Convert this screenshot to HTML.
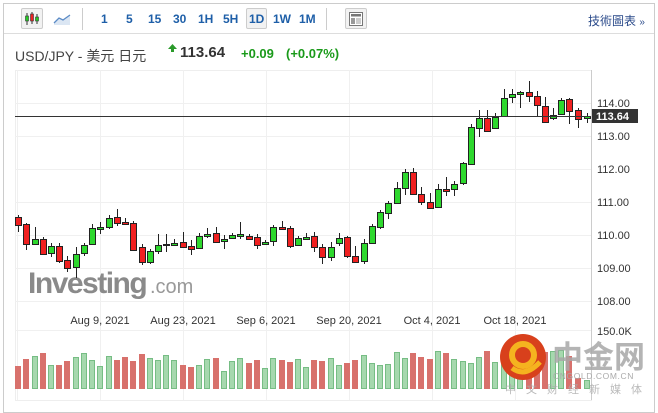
<!DOCTYPE html>
<html><head><meta charset="utf-8"><style>
*{margin:0;padding:0;box-sizing:border-box}
body{width:658px;height:407px;background:#fff;font-family:"Liberation Sans","Noto Sans CJK TC",sans-serif;overflow:hidden;position:relative}
.frame{position:absolute;left:3px;top:3px;width:652px;height:410px;border:1px solid #ccc}
.tb{position:absolute;left:4px;top:4px;width:650px;height:30px;border-bottom:1px solid #ddd}
.t{position:absolute;top:12px;font-size:12px;font-weight:bold;color:#1e5fa8}
.btn{position:absolute;top:8px;height:21px;border:1px solid #ccc;border-radius:2px;background:#f2f2f2}
.sep{position:absolute;top:8px;width:1px;height:22px;background:#ccc}
</style></head><body>
<div class="frame"></div>
<div class="tb"></div>
<div class="btn" style="left:21px;width:22px"></div>
<svg style="position:absolute;left:24px;top:11px" width="16" height="16"><line x1="3" y1="2" x2="3" y2="14" stroke="#333"/><rect x="1.5" y="5" width="3" height="5" fill="#2c2" stroke="#333" stroke-width=".6"/><line x1="8" y1="1" x2="8" y2="13" stroke="#333"/><rect x="6.5" y="3" width="3" height="7" fill="#e22" stroke="#333" stroke-width=".6"/><line x1="13" y1="3" x2="13" y2="13" stroke="#333"/><rect x="11.5" y="6" width="3" height="4" fill="#2c2" stroke="#333" stroke-width=".6"/></svg>
<svg style="position:absolute;left:53px;top:12px" width="18" height="14"><path d="M1 11 L6 6 L10 8 L17 3 L17 13 L1 13Z" fill="#dbe6f3"/><path d="M1 11 L6 6 L10 8 L17 3" fill="none" stroke="#5b8bc6" stroke-width="1.3"/></svg>
<div class="sep" style="left:82px"></div>
<div class="t" style="left:101px">1</div>
<div class="t" style="left:126px">5</div>
<div class="t" style="left:148px">15</div>
<div class="t" style="left:173px">30</div>
<div class="t" style="left:198px">1H</div>
<div class="t" style="left:223px">5H</div>
<div class="btn" style="left:246px;width:21px"></div>
<div class="t" style="left:249px">1D</div>
<div class="t" style="left:273px">1W</div>
<div class="t" style="left:299px">1M</div>
<div class="sep" style="left:326px"></div>
<div class="btn" style="left:345px;width:22px"></div>
<svg style="position:absolute;left:349px;top:12px" width="14" height="14"><rect x=".5" y=".5" width="13" height="13" fill="#fff" stroke="#777"/><rect x="2" y="2" width="10" height="2.5" fill="#777"/><rect x="2" y="6" width="4" height="6" fill="#999"/><line x1="7" y1="7" x2="12" y2="7" stroke="#999"/><line x1="7" y1="9" x2="12" y2="9" stroke="#999"/><line x1="7" y1="11" x2="12" y2="11" stroke="#999"/></svg>
<div style="position:absolute;left:588px;top:12px;font-size:12px;color:#2a4a8a">技術圖表 <span style="font-size:10px">»</span></div>
<div style="position:absolute;left:15px;top:46px;font-size:14px;color:#444">USD/JPY - 美元 日元</div>
<svg style="position:absolute;left:168px;top:44px" width="9" height="8"><path d="M4.5 0 L9 5 L6 5 L6 8 L3 8 L3 5 L0 5Z" fill="#2a9a2a"/></svg>
<div style="position:absolute;left:180px;top:44px;font-size:15px;font-weight:bold;color:#333">113.64</div>
<div style="position:absolute;left:241px;top:46px;font-size:13px;font-weight:bold;color:#1a9a1a">+0.09</div>
<div style="position:absolute;left:286px;top:46px;font-size:13px;font-weight:bold;color:#1a9a1a">(+0.07%)</div>
<svg id="ch" style="position:absolute;left:0;top:0" width="658" height="407" xmlns="http://www.w3.org/2000/svg"></svg>
<script>
var s='';
s+='<rect x="15.5" y="70.5" width="576" height="330" fill="none" stroke="#eee"/>';
[17,100,183,266,349,432,515].forEach(function(x){s+='<line x1="'+x+'.5" y1="70" x2="'+x+'.5" y2="400" stroke="#f0f0f0"/>';});
[103,136,169,202,235,268,301,330].forEach(function(y){s+='<line x1="15" y1="'+y+'.5" x2="591" y2="'+y+'.5" stroke="#f0f0f0"/>';});
s+='<line x1="591.5" y1="70" x2="591.5" y2="400" stroke="#ccc"/>';
s+='<text x="28" y="293" font-family="Liberation Sans" font-weight="bold" font-size="30" fill="#8a8a8a" letter-spacing="-1.5">Investing</text><text x="150" y="293" font-family="Liberation Sans" font-size="20" fill="#999">.com</text>';
var ax=[["114.00",103],["113.00",136],["112.00",169],["111.00",202],["110.00",235],["109.00",268],["108.00",301],["150.0K",331]];
ax.forEach(function(a){s+='<text x="597" y="'+(a[1]+4)+'" font-family="Liberation Sans" font-size="11" fill="#333">'+a[0]+'</text>';});
[["Aug 9, 2021",100],["Aug 23, 2021",183],["Sep 6, 2021",266],["Sep 20, 2021",349],["Oct 4, 2021",432],["Oct 18, 2021",515]].forEach(function(d){s+='<text x="'+d[1]+'" y="324" text-anchor="middle" font-family="Liberation Sans" font-size="11" fill="#333">'+d[0]+'</text>';});
var C=[[18,215,217,225,232,'r'],[26,223,224,244,250,'r'],[35,227,239,244,245,'g'],[43,237,239,254,255,'r'],[51,243,246,253,257,'g'],[59,243,246,261,263,'r'],[67,256,260,268,272,'r'],[76,247,254,267,278,'g'],[84,243,245,253,256,'g'],[92,224,228,244,245,'g'],[100,222,227,229,234,'g'],[109,215,218,227,229,'g'],[117,209,217,223,226,'r'],[125,218,222,224,225,'r'],[133,221,223,250,251,'r'],[142,244,247,262,265,'r'],[150,249,251,262,264,'g'],[158,234,245,251,254,'g'],[166,234,244,245,252,'g'],[174,239,243,245,245,'g'],[183,232,242,247,248,'r'],[191,240,246,249,255,'r'],[199,233,236,248,249,'g'],[207,228,234,236,238,'g'],[216,227,233,242,243,'r'],[224,235,239,241,249,'g'],[232,233,235,238,238,'g'],[240,222,234,236,239,'g'],[249,234,236,239,240,'r'],[257,234,237,245,249,'r'],[265,240,242,244,244,'g'],[273,225,227,241,246,'g'],[282,221,227,229,230,'r'],[290,226,228,246,248,'r'],[298,236,238,245,246,'g'],[306,233,237,239,240,'g'],[314,232,236,247,252,'r'],[322,244,247,257,264,'r'],[331,242,247,257,261,'g'],[339,233,238,243,246,'g'],[347,236,237,256,258,'r'],[355,246,256,262,262,'r'],[364,239,243,261,264,'g'],[372,224,226,243,243,'g'],[380,210,212,227,229,'g'],[388,201,203,213,219,'g'],[397,182,188,203,204,'g'],[405,169,172,188,195,'g'],[413,168,172,194,195,'r'],[421,187,194,202,205,'r'],[430,193,202,208,209,'r'],[438,184,189,207,207,'g'],[446,177,189,191,196,'r'],[454,181,184,189,196,'g'],[463,162,163,183,185,'g'],[471,124,127,164,165,'g'],[479,110,118,128,137,'g'],[487,110,118,131,132,'r'],[495,113,117,128,129,'g'],[504,89,98,116,116,'g'],[512,89,94,97,103,'g'],[520,91,92,94,108,'g'],[529,81,92,96,102,'r'],[537,91,96,105,116,'r'],[545,97,106,122,123,'r'],[553,108,115,118,120,'g'],[561,98,100,114,115,'g'],[569,98,99,111,124,'r'],[578,108,110,119,128,'r'],[587,113,116,118,123,'g']];
var V=[366,359,356,353,365,365,361,357,353,360,366,356,360,357,361,354,358,360,355,360,365,367,365,359,358,371,361,358,363,360,368,358,360,362,359,367,360,361,358,365,363,360,355,363,365,364,352,358,353,357,359,351,353,359,361,363,357,351,362,355,360,358,352,355,352,351,350,356,378,380];
C.forEach(function(c,i){var v=V[i];var g=c[5]=='g';s+='<rect x="'+(c[0]-3)+'.5" y="'+v+'.5" width="5" height="'+(388-v)+'" fill="'+(g?'#a6d8ae':'#d8716c')+'" stroke="'+(g?'#76bd84':'#d8716c')+'"/>';});
C.forEach(function(c){var g=c[5]=='g';s+='<line x1="'+c[0]+'.5" y1="'+c[1]+'" x2="'+c[0]+'.5" y2="'+c[4]+'" stroke="#222"/>';var h=Math.max(1,c[3]-c[2]);s+='<rect x="'+(c[0]-3)+'.5" y="'+c[2]+'.5" width="6" height="'+h+'" fill="'+(g?'#2ed82e':'#f02020')+'" stroke="#222"/>';});
s+='<line x1="15" y1="116.5" x2="591" y2="116.5" stroke="#333"/>';
s+='<rect x="592" y="109" width="46" height="14" fill="#333"/><text x="596" y="120" font-family="Liberation Sans" font-size="11" font-weight="bold" fill="#fff">113.64</text>';
s+='<circle cx="523" cy="357" r="23" fill="#d8401c"/><circle cx="523" cy="355" r="11" fill="none" stroke="#f5b31f" stroke-width="6"/><path d="M512 368 Q525 378 540 362" fill="none" stroke="#f5b31f" stroke-width="5"/>';
s+='<text x="552" y="368" font-family="Noto Sans CJK SC" font-weight="bold" font-size="31" fill="#a8a8a8" opacity=".85">中金网</text>';
s+='<text x="553" y="379" font-family="Liberation Sans" font-size="8.5" fill="#aaa" letter-spacing=".6">CNGOLD.COM.CN</text>';
s+='<text x="505" y="393" font-family="Noto Sans CJK SC" font-size="11" fill="#aaa" letter-spacing="10" opacity=".8">中文财经新媒体</text>';
document.getElementById('ch').innerHTML=s;
</script>
</body></html>
